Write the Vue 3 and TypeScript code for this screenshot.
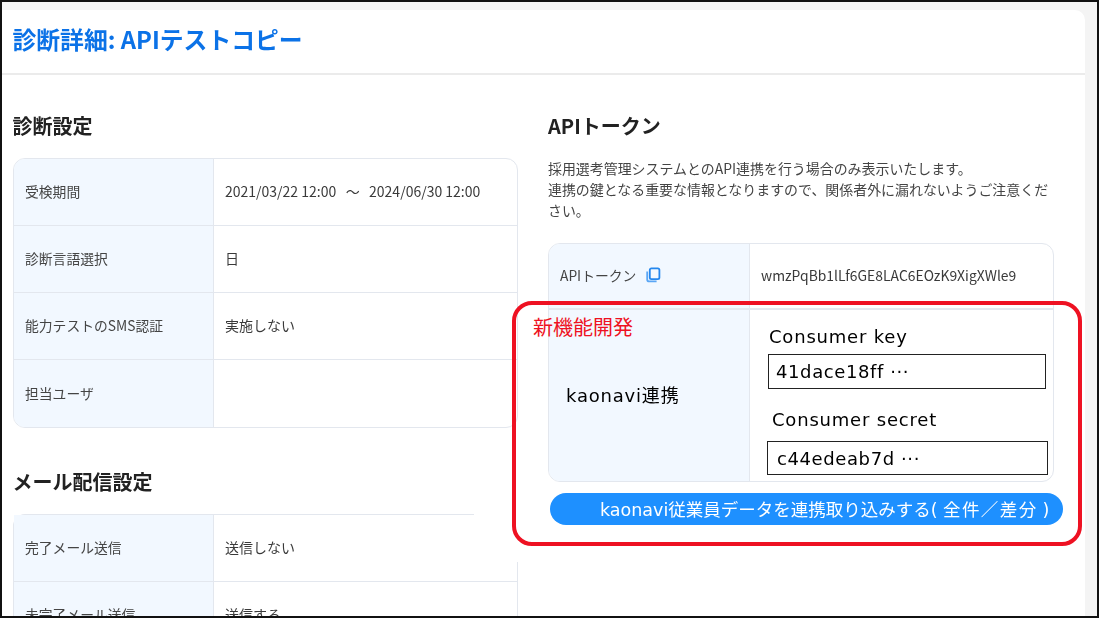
<script setup lang="ts">
interface Row { label: string; value: string }
const settings: Row[] = [
  { label: '受検期間', value: '2021/03/22 12:00   〜   2024/06/30 12:00' },
  { label: '診断言語選択', value: '日' },
  { label: '能力テストのSMS認証', value: '実施しない' },
  { label: '担当ユーザ', value: '' },
]
const mail: Row[] = [
  { label: '完了メール送信', value: '送信しない' },
  { label: '未完了メール送信', value: '送信する' },
]
</script>

<template>
  <div class="frame">
    <main class="card">
      <header class="head"><h1>診断詳細: APIテストコピー</h1></header>
      <div class="body">
        <section class="col left">
          <h2>診断設定</h2>
          <div class="table">
            <div v-for="r in settings" :key="r.label" class="row">
              <div class="th">{{ r.label }}</div>
              <div class="td">{{ r.value }}</div>
            </div>
          </div>
          <h2 class="second">メール配信設定</h2>
          <div class="table mail">
            <div v-for="r in mail" :key="r.label" class="row">
              <div class="th">{{ r.label }}</div>
              <div class="td">{{ r.value }}</div>
            </div>
            <div class="patch"></div>
          </div>
        </section>
        <section class="col">
          <h2>APIトークン</h2>
          <p class="note">採用選考管理システムとのAPI連携を行う場合のみ表示いたします。<br />連携の鍵となる重要な情報となりますので、関係者外に漏れないようご注意ください。</p>
          <div class="table token">
            <div class="row">
              <div class="th">APIトークン
                <svg class="copy" width="16" height="16" viewBox="0 0 16 16" fill="none" stroke="#2587ee" stroke-width="1.8">
                  <path d="M2.2 4.4v8c0 1.2 .8 2 2 2h7.4" stroke="#5aa6f5" />
                  <rect x="4.8" y="1.4" width="9.6" height="10.8" rx="1.6" />
                </svg>
              </div>
              <div class="td">wmzPqBb1lLf6GE8LAC6EOzK9XigXWle9</div>
            </div>
            <div class="row kao">
              <div class="th"><span class="kao-label">kaonavi連携</span></div>
              <div class="td stack">
                <span class="cap">Consumer key</span>
                <span class="box one">41dace18ff ···</span>
                <span class="cap two">Consumer secret</span>
                <span class="box three">c44edeab7d ···</span>
              </div>
            </div>
          </div>
          <button class="pill">kaonavi従業員データを連携取り込みする<span class="tail"><span class="lp">(</span>全件／差分<span class="rp">)</span></span></button>
        </section>
      </div>
    </main>
    <div class="callout"><span>新機能開発</span></div>
  </div>
</template>

<style>
html, body { margin: 0; background: #fff; }
</style>

<style scoped>
* { box-sizing: border-box; }
.frame {
  position: relative;
  width: 1099px;
  height: 618px;
  overflow: hidden;
  border: 2px solid #111;
  background: #f4f4f4;
  padding: 8px 12px 0 0;
  font-family: "Noto Sans CJK JP", "Noto Sans", sans-serif;
  font-size: 14px;
  color: #3a3a3a;
}
.card {
  height: 640px;
  background: #fff;
  border-top-right-radius: 10px;
  filter: blur(0.3px);
}
.head {
  height: 65px;
  padding: 0 11px 5px;
  display: flex;
  align-items: center;
  border-bottom: 2px solid #ebebeb;
}
h1 {
  margin: 0 0 0 -0.5px;
  font-size: 23.8px;
  font-weight: 700;
  color: #0b72e7;
  line-height: 34px;
}
h2 {
  margin: 0;
  font-size: 20px;
  font-weight: 700;
  line-height: 28px;
  color: #222;
}
.left h2 { margin-left: -0.5px; }
.left .second { margin-top: 40px; }
.body {
  display: flex;
  gap: 30px;
  padding: 37px 0 0 11px;
}
.col { width: 505px; flex: none; }
.table {
  position: relative;
  margin-top: 18px;
  border: 1px solid #e3e7ee;
  border-radius: 12px;
  overflow: hidden;
}
.row {
  display: flex;
  height: 67px;
  border-bottom: 1px solid #e3e7ee;
}
.row:last-child { border-bottom: 0; }
.th {
  width: 200px;
  flex: none;
  display: flex;
  align-items: center;
  padding: 0 0 2px 11px;
  background: #f2f8ff;
  border-right: 1px solid #e3e7ee;
  color: #444;
  font-size: 13.8px;
}
.td {
  flex: 1;
  display: flex;
  align-items: center;
  padding: 0 0 2px 11px;
  white-space: pre;
}
.mail { overflow: visible; border-bottom: 0; }
.patch {
  position: absolute;
  left: 460px;
  top: -10px;
  width: 50px;
  height: 57px;
  background: #fff;
}
.note {
  margin: 18px 0 22px;
  line-height: 21px;
  font-size: 13.95px;
  color: #444;
  width: 506px;
}
.token { margin-top: 0; width: 506px; height: 239px; }
.token .row:first-child { height: 66px; border-bottom-width: 2px; }
.token .row:first-child .td { font-size: 13.9px; }
.token .th { width: 201px; }
.copy { margin-left: 9px; }
.token .kao { height: 172px; }
.kao-label {
  margin-left: 6px;
  font-family: "DejaVu Sans", "Noto Sans CJK JP", sans-serif;
  font-size: 18px;
  letter-spacing: .8px;
  color: #000;
  margin-top: -3px;
}
.stack {
  flex-direction: column;
  align-items: flex-start;
  padding: 15px 0 0;
  color: #000;
  font-family: "DejaVu Sans", "Noto Sans CJK JP", sans-serif;
}
.cap { font-size: 18px; line-height: 24px; margin-left: 19px; letter-spacing: .8px; }
.cap.two { margin: 19px 0 0 22px; }
.box {
  display: flex;
  align-items: center;
  margin: 5px 0 0 18px;
  width: 278px;
  height: 35px;
  border: 1.5px solid #222;
  padding-left: 7px;
  font-size: 18px;
  letter-spacing: .6px;
}
.box.three { margin: 9px 0 0 17px; width: 281px; height: 34px; padding-left: 9px; }
.pill {
  display: block;
  margin: 11px 0 0 2px;
  width: 513px;
  height: 32px;
  border: 0;
  border-radius: 16px;
  background: #1e90ff;
  color: #fff;
  font-family: "DejaVu Sans", "Noto Sans CJK JP", sans-serif;
  font-size: 17.5px;
  line-height: 32px;
  text-align: left;
  padding: 1px 0 0 50px;
  white-space: nowrap;
}
.tail { letter-spacing: 1.4px; }
.lp { margin: 0 4px 0 0; }
.rp { margin-left: 5px; }
.callout {
  position: absolute;
  left: 510px;
  top: 299px;
  width: 570px;
  height: 245px;
  border: 4px solid #ee1122;
  border-radius: 20px;
  padding: 8px 0 0 17px;
  color: #ee1122;
  font-size: 20px;
  line-height: 28px;
}
</style>
